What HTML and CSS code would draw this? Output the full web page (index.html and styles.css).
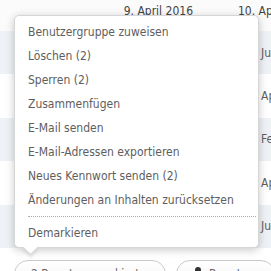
FILE: index.html
```html
<!DOCTYPE html>
<html lang="de">
<head>
<meta charset="utf-8">
<link rel="stylesheet" href="styles.css">
</head>
<body>
<div class="page">
  <div class="table">
    <div class="row head">
      <div class="cell c1">9. April 2016</div>
      <div class="cell c2">10. April 2016</div>
    </div>
    <div class="row odd"><div class="cell c1">14. Juni 2016</div><div class="cell c2 r">Juni</div></div>
    <div class="row"><div class="cell c1">2. April 2016</div><div class="cell c2 r">April</div></div>
    <div class="row odd"><div class="cell c1">3. Februar 2016</div><div class="cell c2 r">Februar</div></div>
    <div class="row"><div class="cell c1">9. April 2016</div><div class="cell c2 r">April</div></div>
    <div class="row odd"><div class="cell c1">1. Juli 2016</div><div class="cell c2 r">Juli</div></div>
  </div>
  <div class="footer">
    <div class="btn wide">2 Benutzer markiert</div>
    <div class="btn"><svg class="uicon" width="10" height="12" viewBox="0 0 10 12"><circle cx="5" cy="3" r="3" fill="#333"/><path d="M0 12c0-4 2-5 5-5s5 1 5 5z" fill="#333"/></svg>Benutzer</div>
  </div>
  <div class="menu">
    <ul class="items">
      <li>Benutzergruppe zuweisen</li>
      <li>Löschen (2)</li>
      <li>Sperren (2)</li>
      <li>Zusammenfügen</li>
      <li>E-Mail senden</li>
      <li>E-Mail-Adressen exportieren</li>
      <li>Neues Kennwort senden (2)</li>
      <li>Änderungen an Inhalten zurücksetzen</li>
    </ul>
    <div class="sep"></div>
    <ul class="items">
      <li>Demarkieren</li>
    </ul>
    <div class="arrow"></div>
  </div>
</div>
</body>
</html>
```

FILE: styles.css
```css
html, body {
  margin: 0;
  padding: 0;
  background: #fff;
}
body {
  font-family: "DejaVu Sans Condensed", "DejaVu Sans", sans-serif;
  font-size: 12px;
  color: #5e5e5e;
}
.page {
  position: relative;
  width: 271px;
  height: 271px;
  overflow: hidden;
}
.table {
  display: flex;
  flex-direction: column;
}
.row {
  display: grid;
  grid-template-columns: 200px 71px;
  height: 43.4px;
  align-items: center;
  background: #fff;
  overflow: hidden;
}
.row.head {
  height: 31px;
  align-items: start;
  background: #fbfbfb;
  color: #444;
}
.row.odd {
  background: #eef1f5;
}
.cell {
  white-space: nowrap;
  overflow: hidden;
}
.head .cell {
  padding-top: 4px;
}
.c1 {
  text-align: right;
  padding-right: 7px;
}
.c2 {
  padding-left: 38px;
}
.c2.r {
  padding-left: 61px;
}
.footer {
  display: flex;
  gap: 10px;
  padding: 12px 0 0 14px;
  overflow: hidden;
}
.btn {
  flex: none;
  height: 28px;
  border: 1px solid #c9c9c9;
  border-radius: 15px;
  padding: 6px 16px 0;
  box-sizing: border-box;
  color: #666;
  white-space: nowrap;
  background: linear-gradient(#fff, #f2f2f2);
}
.btn.wide {
  width: 152px;
}
.uicon {
  margin-right: 6px;
  vertical-align: -1px;
}
.menu {
  position: absolute;
  left: 14px;
  top: 15px;
  width: 245px;
  height: 233px;
  box-sizing: border-box;
  background: #fff;
  border: 1px solid #d6d6d6;
  border-radius: 5px;
  box-shadow: 0 2px 8px rgba(0, 0, 0, 0.22);
  padding: 4px 0 0;
}
.items {
  list-style: none;
  margin: 0;
  padding: 0;
}
.items li {
  height: 24px;
  line-height: 24px;
  padding-left: 13px;
  white-space: nowrap;
}
.sep {
  margin: 4px 2px 4px 13px;
  border-top: 1px dotted #aaa;
}
.arrow {
  position: absolute;
  left: 10px;
  bottom: -6px;
  width: 10px;
  height: 10px;
  background: #fff;
  border-right: 1px solid #d6d6d6;
  border-bottom: 1px solid #d6d6d6;
  transform: rotate(45deg);
  box-shadow: 2px 2px 3px rgba(0, 0, 0, 0.1);
}
```
